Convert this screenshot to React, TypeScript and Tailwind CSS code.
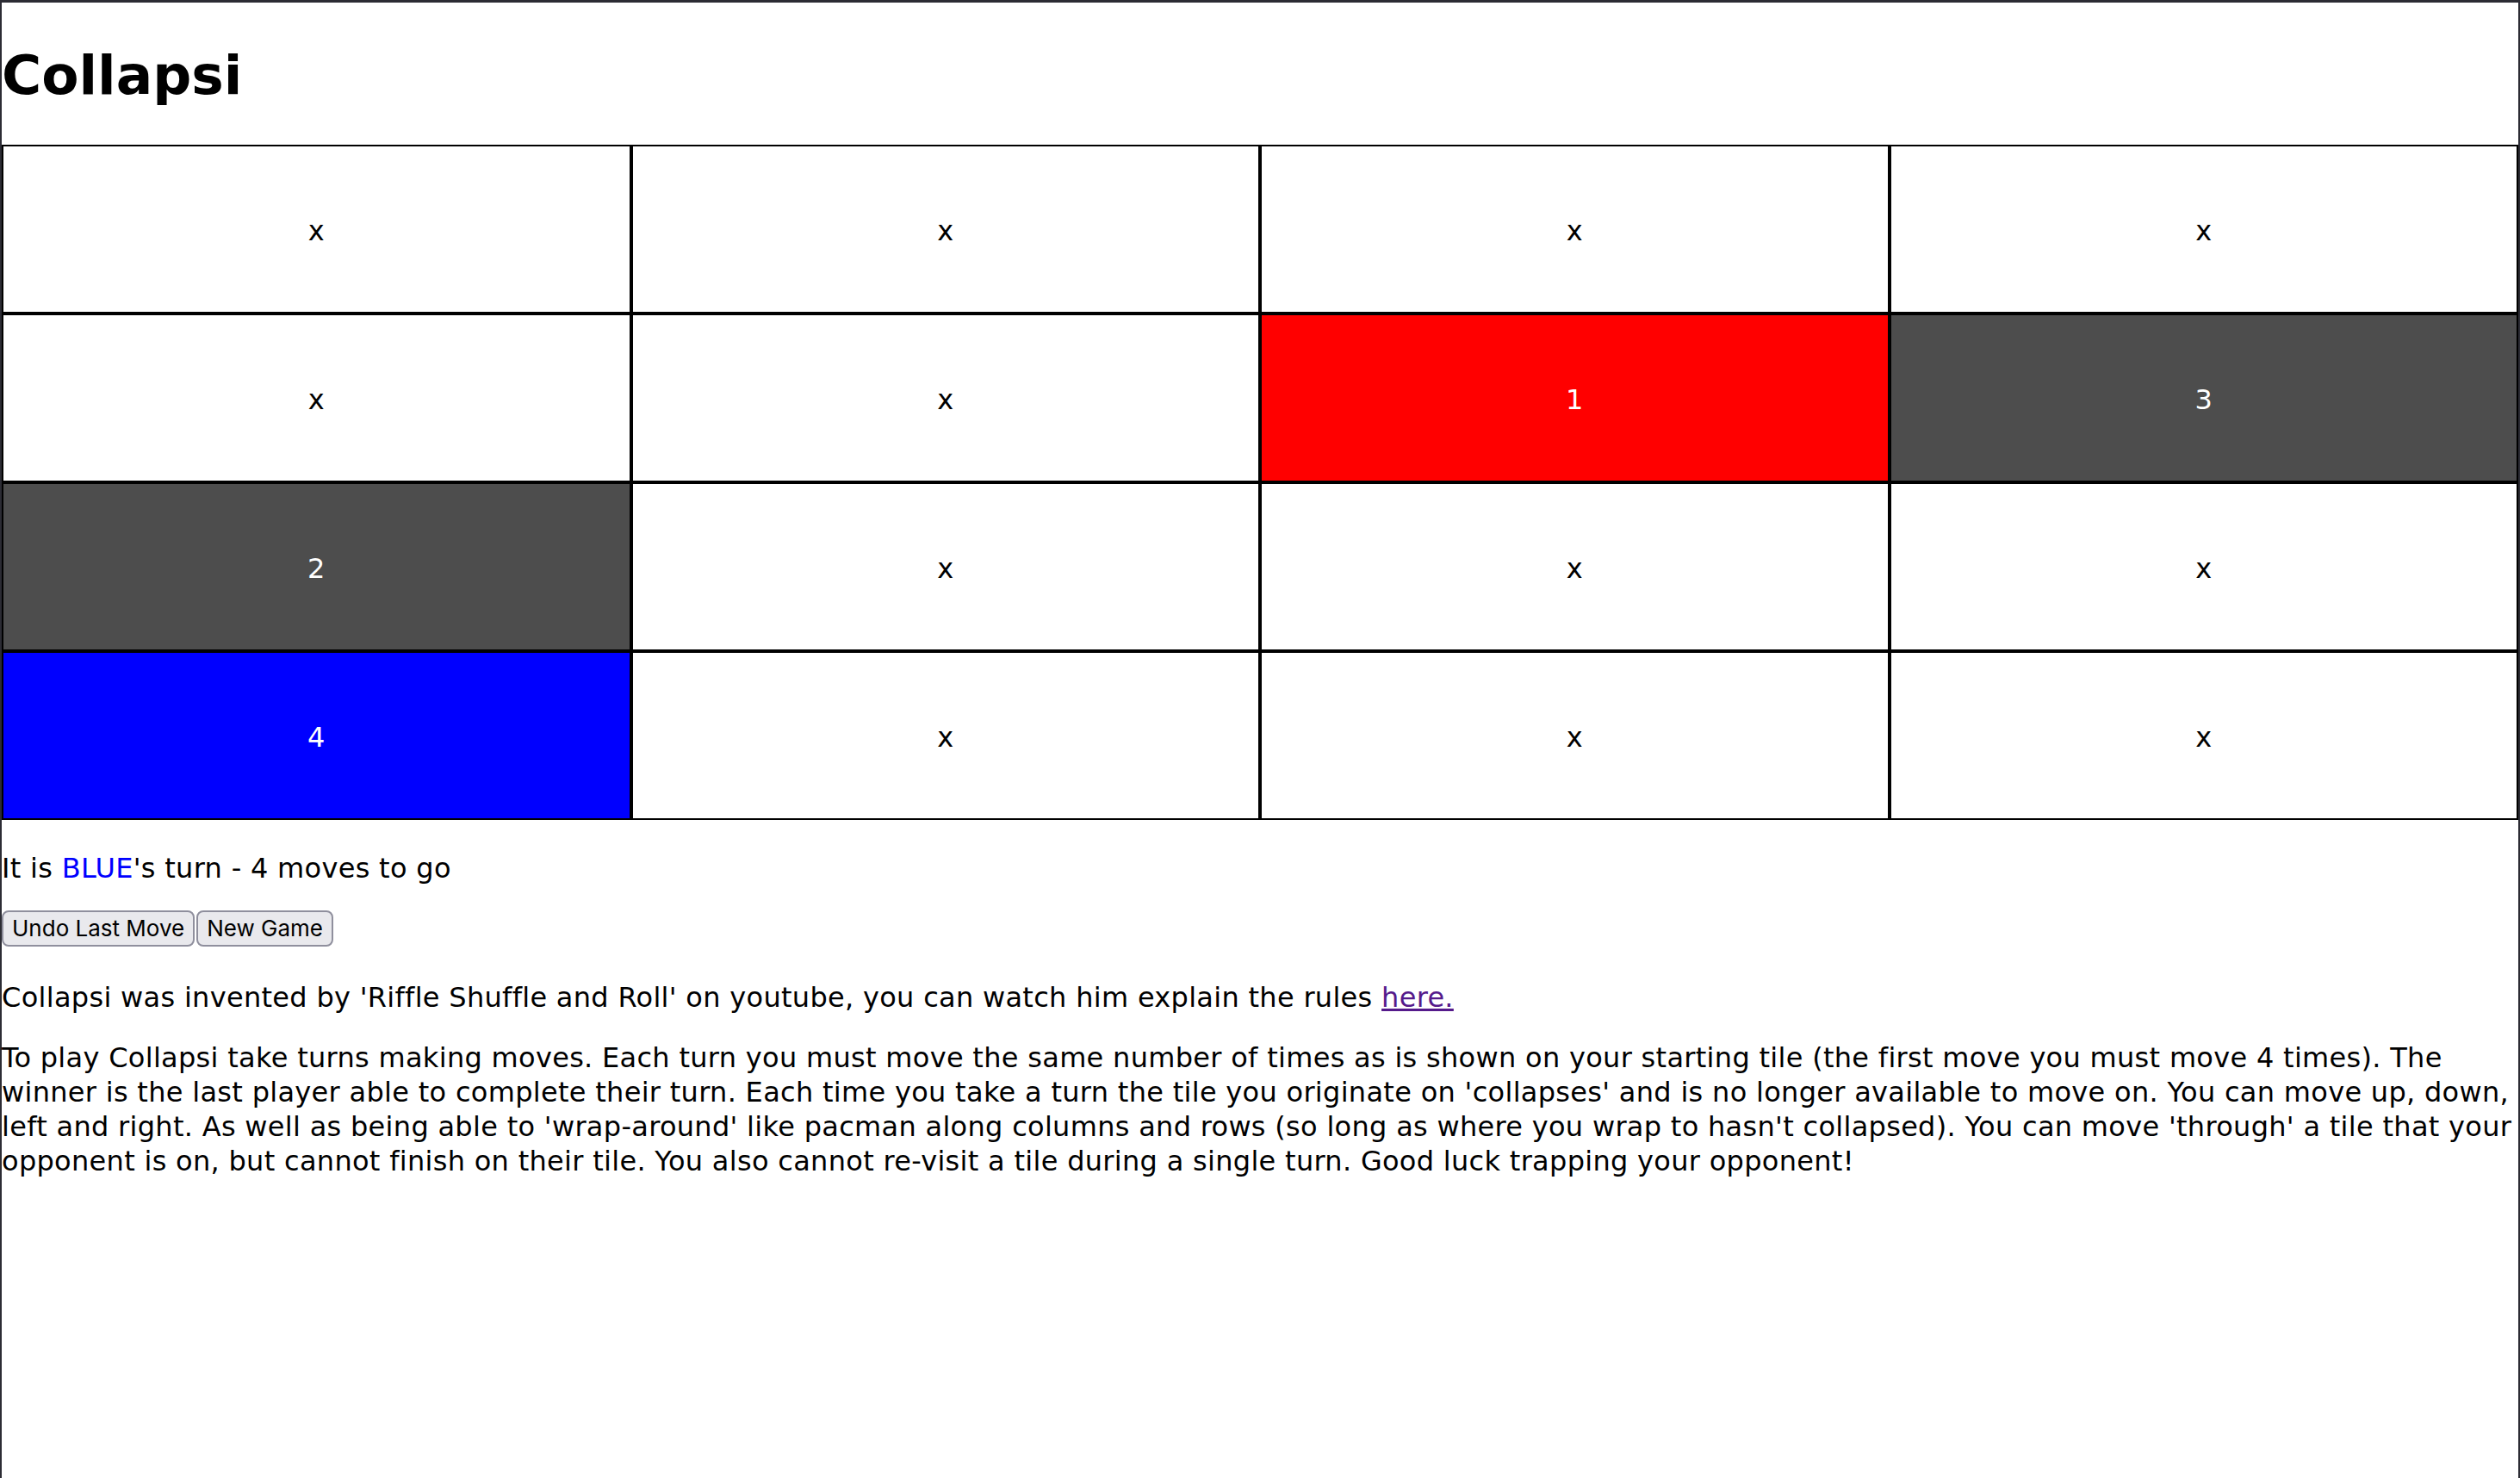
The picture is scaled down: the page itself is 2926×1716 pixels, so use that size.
import React from "react";

type Cell = { label: string; bg?: string };

const board: Cell[][] = [
  [{ label: "x" }, { label: "x" }, { label: "x" }, { label: "x" }],
  [{ label: "x" }, { label: "x" }, { label: "1", bg: "red" }, { label: "3", bg: "gray" }],
  [{ label: "2", bg: "gray" }, { label: "x" }, { label: "x" }, { label: "x" }],
  [{ label: "4", bg: "blue" }, { label: "x" }, { label: "x" }, { label: "x" }],
];

function cellClass(bg?: string) {
  if (bg === "red") return "bg-[#ff0000] text-white";
  if (bg === "gray") return "bg-[#4d4d4d] text-white";
  if (bg === "blue") return "bg-[#0000ff] text-white";
  return "bg-white text-black";
}

export default function App() {
  return (
    <div
      className="min-h-screen bg-white text-black border-t-[3px] border-x-2 border-[#2c2c34] text-[32px] leading-[40px] tracking-[0.3px]"
      style={{ fontFamily: '"DejaVu Sans", Verdana, sans-serif' }}
    >
      <h1 className="mt-[46px] mb-[41px] text-[63px] leading-[78px] font-bold tracking-normal">Collapsi</h1>

      {/* Board */}
      <div className="grid grid-cols-4">
        {board.flat().map((cell, i) => (
          <div
            key={i}
            className={`h-[196px] pt-[3px] border-2 border-black flex items-center justify-center ${cellClass(cell.bg)}`}
          >
            {cell.label}
          </div>
        ))}
      </div>

      <p className="mt-[36px] mb-[29px]">
        It is <span className="text-[#0000ff]">BLUE</span>'s turn - 4 moves to go
      </p>

      <div className="flex gap-[2px] tracking-normal" style={{ fontFamily: 'Inter, "Liberation Sans", sans-serif' }}>
        <button className="h-[42px] px-[10px] text-[26px] leading-none bg-[#e9e9ed] border-2 border-[#8f8f9d] rounded-[8px] text-black">
          Undo Last Move
        </button>
        <button className="h-[42px] px-[10px] text-[26px] leading-none bg-[#e9e9ed] border-2 border-[#8f8f9d] rounded-[8px] text-black">
          New Game
        </button>
      </div>

      <p className="mt-[39px]">
        Collapsi was invented by 'Riffle Shuffle and Roll' on youtube, you can watch him explain the rules{" "}
        <a href="#" className="text-[#551a8b] underline">
          here.
        </a>
      </p>

      <p className="mt-[30px]">
        To play Collapsi take turns making moves. Each turn you must move the same number of times as is shown on your
        starting tile (the first move you must move 4 times). The winner is the last player able to complete their
        turn. Each time you take a turn the tile you originate on 'collapses' and is no longer available to move on.
        You can move up, down, left and right. As well as being able to 'wrap-around' like pacman along columns and
        rows (so long as where you wrap to hasn't collapsed). You can move 'through' a tile that your opponent is on,
        but cannot finish on their tile. You also cannot re-visit a tile during a single turn. Good luck trapping your
        opponent!
      </p>
    </div>
  );
}
